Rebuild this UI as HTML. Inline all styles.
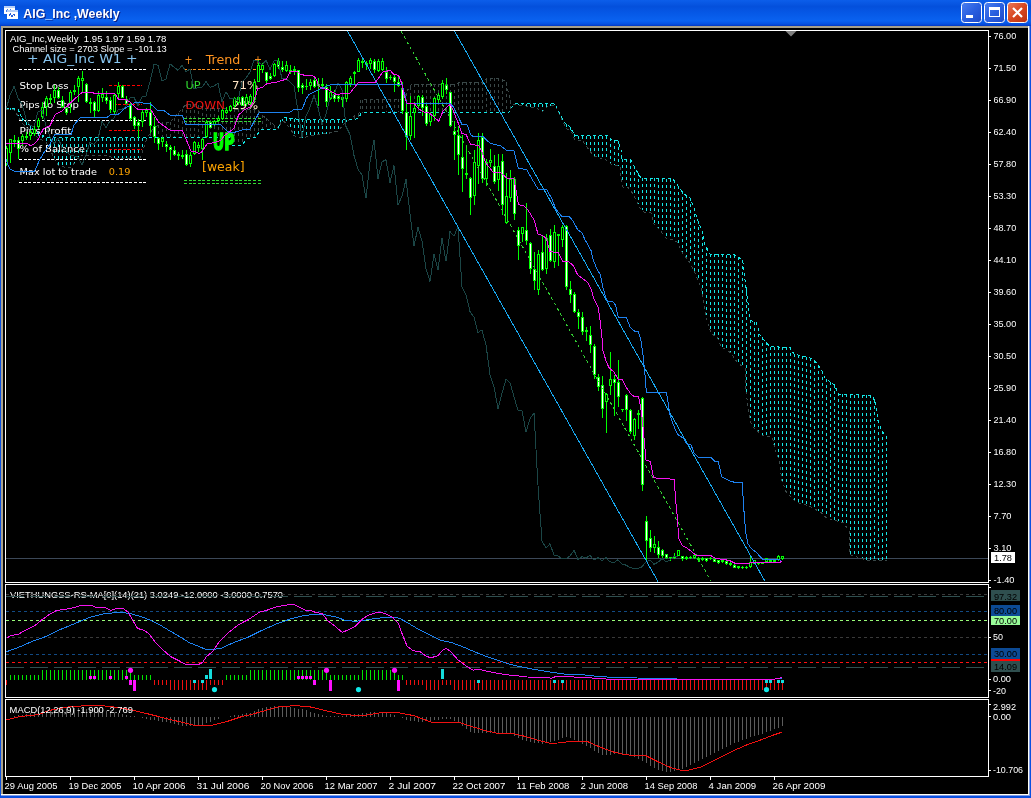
<!DOCTYPE html><html><head><meta charset="utf-8"><title>AIG_Inc,Weekly</title><style>html,body{margin:0;padding:0;background:#000;overflow:hidden}svg text{white-space:pre}</style></head><body><svg width="1031" height="798" viewBox="0 0 1031 798" style="display:block;will-change:transform">
<defs>
<linearGradient id="tb" x1="0" y1="0" x2="0" y2="1">
<stop offset="0" stop-color="#0c5eea"/><stop offset="0.25" stop-color="#0450dc"/><stop offset="0.5" stop-color="#0658e6"/><stop offset="0.8" stop-color="#0a62f0"/>
<stop offset="0.93" stop-color="#0650e0"/><stop offset="1" stop-color="#0338c0"/></linearGradient>
<linearGradient id="bb" x1="0" y1="0" x2="1" y2="1"><stop offset="0" stop-color="#4a7ff0"/><stop offset="0.5" stop-color="#2a5fe0"/><stop offset="1" stop-color="#1c48c8"/></linearGradient>
<linearGradient id="rb" x1="0" y1="0" x2="1" y2="1"><stop offset="0" stop-color="#e8795a"/><stop offset="0.5" stop-color="#d8471f"/><stop offset="1" stop-color="#b83010"/></linearGradient>
<clipPath id="cm"><rect x="6" y="31" width="982" height="551"/></clipPath>
<clipPath id="c1"><rect x="6" y="585" width="982" height="112"/></clipPath>
<clipPath id="c2"><rect x="6" y="700" width="982" height="76"/></clipPath>
</defs>
<rect x="0" y="0" width="1031" height="798" fill="#0a50e0"/>
<rect x="0" y="0" width="1031" height="26" fill="url(#tb)"/>
<rect x="1" y="26" width="1028" height="769" fill="#a8a08a"/>
<rect x="3" y="28" width="1025" height="766" fill="#000"/>
<rect x="1028" y="26" width="1" height="769" fill="#fffff4"/>
<rect x="1" y="794" width="1028" height="1" fill="#fffff4"/>
<rect x="1029" y="26" width="2" height="772" fill="#0a50e0"/>
<rect x="1029" y="26" width="1" height="769" fill="#7f9ce8"/>
<rect x="0" y="795" width="1031" height="3" fill="#0a50e0"/>
<rect x="1" y="795" width="1029" height="1" fill="#7f9ce8"/>
<g shape-rendering="crispEdges"><rect x="4" y="6" width="11" height="8" fill="#fff"/><rect x="4" y="6" width="11" height="2" fill="#b8d0f8"/><path d="M6 11.5 l1.5 -2 l1.5 2 l1.5 -2 l1.5 2" stroke="#4a7fe8" fill="none" stroke-width="1"/><rect x="7" y="10" width="11" height="9" fill="#fff" stroke="#2a62dc" stroke-width="0"/><rect x="7" y="10" width="11" height="2" fill="#b8d0f8"/><path d="M8.5 16.5 l2 -2.5 l1.5 2.5 l2 -2.5 l1.5 2.5" stroke="#2a5fd8" fill="none" stroke-width="1"/></g>
<text x="24.3" y="18.8" style="font-family:'Liberation Sans',sans-serif;font-weight:bold;font-size:13.5px" fill="#0a1c80" textLength="96.4" lengthAdjust="spacingAndGlyphs">AIG_Inc ,Weekly</text>
<text x="23.3" y="17.8" style="font-family:'Liberation Sans',sans-serif;font-weight:bold;font-size:13.5px" fill="#fff" textLength="96.4" lengthAdjust="spacingAndGlyphs">AIG_Inc ,Weekly</text>
<rect x="961.5" y="2.5" width="20" height="20" rx="3" fill="url(#bb)" stroke="#fff" stroke-width="1"/>
<rect x="984.5" y="2.5" width="20" height="20" rx="3" fill="url(#bb)" stroke="#fff" stroke-width="1"/>
<rect x="1007.5" y="2.5" width="20" height="20" rx="3" fill="url(#rb)" stroke="#fff" stroke-width="1"/>
<rect x="966" y="15" width="7" height="3" fill="#fff"/>
<rect x="989.5" y="7.5" width="10" height="9" fill="none" stroke="#fff" stroke-width="1"/><rect x="989" y="7" width="11" height="3" fill="#fff"/>
<path d="M1013 8 l9 9 M1022 8 l-9 9" stroke="#fff" stroke-width="2.2" fill="none"/>
<g shape-rendering="crispEdges" fill="none" stroke="#fff" stroke-width="1">
<rect x="5.5" y="30.5" width="983" height="552"/>
<rect x="5.5" y="584.5" width="983" height="113"/>
<rect x="5.5" y="699.5" width="983" height="77"/>
</g>
<g clip-path="url(#cm)">
<rect x="6" y="558" width="982" height="1" fill="#3c4858"/>
<path d="M150.5 133V138M154.5 128V138M158.5 125V138M162.5 123V138M166.5 122V138M170.5 122V138M174.5 118V138M178.5 113V138M182.5 109V138M186.5 104V138M190.5 104V138M194.5 104V138M198.5 105V138M202.5 107V138M206.5 108V138M210.5 108V138M214.5 108V138M218.5 109V138M222.5 109V138M226.5 109V138M230.5 109V138M234.5 109V145M238.5 109V145M242.5 109V145M246.5 110V140M250.5 110V138M254.5 110V137M258.5 110V133M262.5 115V130M266.5 118V129M270.5 122V129M274.5 125V129M278.5 127V129M354.5 116V119M358.5 114V119M362.5 100V113M366.5 100V112M370.5 100V112M374.5 100V112M378.5 100V112M382.5 100V112M386.5 99V112M390.5 99V112M394.5 99V112M398.5 99V112M402.5 99V112M406.5 93V112M410.5 87V112M414.5 84V112M418.5 84V112M422.5 84V112M426.5 84V112M430.5 84V112M434.5 84V112M438.5 84V112M442.5 84V112M446.5 84V112M450.5 84V112M454.5 84V112M458.5 83V112M462.5 82V112M466.5 82V112M470.5 82V112M474.5 82V112M478.5 82V112M482.5 82V112M486.5 80V112M490.5 78V112M494.5 78V112M498.5 78V112M502.5 79V112M506.5 82V112M510.5 100V110" stroke="#3a4848" stroke-width="1" stroke-dasharray="3 3" fill="none" shape-rendering="crispEdges"/>
<path d="M10.5 108V110M14.5 108V110M18.5 109V116M22.5 118V123M26.5 122V127M30.5 126V130M34.5 130V134M38.5 133V138M42.5 135V140M46.5 138V142M50.5 138V149M54.5 138V158M58.5 138V165M62.5 138V166M66.5 138V167M70.5 138V167M74.5 138V164M78.5 138V158M82.5 138V155M86.5 138V155M90.5 138V155M94.5 138V155M98.5 138V155M102.5 138V155M106.5 138V155M110.5 138V156M114.5 138V158M118.5 138V158M122.5 138V158M126.5 138V158M130.5 138V158M134.5 138V158M138.5 138V158M142.5 138V153M146.5 138V141M282.5 119V121M286.5 118V124M290.5 118V128M294.5 119V135M298.5 119V137M302.5 119V138M306.5 120V137M310.5 120V136M314.5 120V135M318.5 120V135M322.5 120V134M326.5 120V134M330.5 120V133M334.5 120V132M338.5 120V131M342.5 120V126M346.5 120V122M518.5 104V105M522.5 104V105M526.5 104V106M530.5 104V107M534.5 104V108M538.5 104V109M542.5 104V112M546.5 104V108M550.5 104V106M554.5 104V105M562.5 118V120M566.5 124V128M570.5 127V131M574.5 134V138M578.5 136V140M582.5 136V140M586.5 136V146M590.5 136V151M594.5 136V156M598.5 136V157M602.5 136V159M606.5 136V160M610.5 138V163M614.5 140V165M618.5 141V166M622.5 159V182M626.5 159V187M630.5 160V190M634.5 166V196M638.5 173V204M642.5 178V210M646.5 178V212M650.5 178V213M654.5 178V224M658.5 179V228M662.5 179V233M666.5 179V238M670.5 179V239M674.5 180V240M678.5 186V244M682.5 191V252M686.5 195V257M690.5 198V263M694.5 208V271M698.5 221V280M702.5 231V294M706.5 247V315M710.5 254V330M714.5 254V335M718.5 254V339M722.5 254V347M726.5 255V350M730.5 255V352M734.5 255V357M738.5 257V363M742.5 260V366M746.5 287V392M750.5 320V418M754.5 322V428M758.5 328V431M762.5 337V435M766.5 342V436M770.5 347V437M774.5 347V445M778.5 347V457M782.5 347V481M786.5 347V492M790.5 347V496M794.5 354V500M798.5 355V503M802.5 356V504M806.5 357V505M810.5 358V506M814.5 360V509M818.5 365V511M822.5 371V514M826.5 379V517M830.5 382V519M834.5 385V520M838.5 393V521M842.5 394V523M846.5 394V526M850.5 395V555M854.5 395V556M858.5 395V557M862.5 395V559M866.5 395V560M870.5 395V560M874.5 400V560M878.5 420V560M882.5 431V560M886.5 436V560" stroke="#14e6e6" stroke-width="1" stroke-dasharray="3 3" fill="none" shape-rendering="crispEdges"/>
<polyline points="6.0,109.5 14.0,110.0 18.0,116.0 22.0,123.0 27.0,127.5 34.0,134.5 40.0,139.0 46.0,142.5 50.0,149.0 54.0,158.0 58.0,165.0 64.0,167.0 72.0,167.0 76.0,160.0 82.0,155.0 108.0,155.0 112.0,158.0 140.0,158.0 143.0,150.0 147.0,138.0 152.0,130.0 158.0,125.0 163.0,122.5 170.5,122.0 174.0,118.0 178.0,113.0 182.6,108.0 186.0,104.5 196.0,104.5 205.0,108.0 230.0,109.0 258.0,110.0 262.0,115.0 268.0,120.0 274.0,125.0 279.0,128.0 281.0,121.0 284.0,121.5 290.4,128.3 294.2,135.8 303.0,138.0 310.6,135.6 328.3,133.3 338.4,130.8 344.7,123.2 349.0,120.2 356.0,115.0 360.0,112.5 361.0,100.0 403.7,99.0 407.0,91.0 411.5,84.5 457.0,84.0 459.0,82.5 484.0,82.5 487.0,78.0 500.0,78.0 506.0,82.0 508.6,93.5 511.0,104.6 515.0,104.6 526.0,106.0 538.0,109.0 542.0,112.0 547.0,107.0 555.0,104.6 558.0,111.0 562.0,120.0 566.0,128.0 572.0,133.0 575.0,140.0 582.0,140.0 589.0,150.0 594.0,156.0 606.0,160.0 612.0,165.0 620.0,166.0 621.0,178.0 623.0,187.0 628.0,187.0 633.0,194.0 640.0,208.0 644.0,212.0 651.0,213.0 654.0,224.0 660.0,230.0 666.0,238.0 674.0,240.0 677.5,242.6 682.5,252.7 690.0,262.7 695.0,272.7 701.0,287.8 704.0,305.0 707.6,323.0 711.0,333.0 717.6,338.0 721.0,346.7 731.0,353.0 737.7,363.0 745.0,368.0 746.0,391.6 749.0,412.6 751.6,425.8 762.0,435.0 772.6,437.6 775.0,449.5 779.0,460.0 782.0,481.0 786.0,491.6 796.0,502.0 809.5,506.0 821.0,512.6 826.6,518.0 843.7,523.0 849.0,531.0 850.0,554.7 866.0,560.0 887.0,560.5" stroke="#3a4848" stroke-width="1" stroke-dasharray="3 3" fill="none" shape-rendering="crispEdges"/>
<polyline points="6.0,108.5 15.0,108.5 18.0,109.0 22.0,118.0 27.0,123.0 34.0,130.0 40.0,134.0 46.0,137.5 231.0,137.5 232.0,145.4 241.7,145.4 246.7,139.0 255.6,137.0 259.0,132.0 263.0,129.0 278.0,129.0 281.0,120.0 284.0,117.4 293.0,118.8 308.0,119.7 348.4,119.7 358.5,118.8 361.0,113.2 365.0,112.5 508.6,112.5 510.0,109.6 515.0,103.6 555.0,103.6 559.0,112.0 564.0,122.0 570.0,127.0 575.0,135.7 608.0,136.0 612.0,140.0 618.0,141.0 621.0,150.0 622.0,159.0 631.0,159.7 636.0,170.0 641.0,178.0 673.0,179.0 678.0,186.0 684.0,194.0 690.0,198.0 694.0,207.5 697.5,220.0 702.6,232.6 705.0,245.0 710.0,254.0 735.0,255.0 742.7,260.0 745.0,280.0 747.7,300.0 750.0,320.0 756.5,323.0 760.0,335.0 766.5,343.0 770.0,346.7 790.0,347.4 794.0,354.0 810.0,358.0 815.0,361.0 821.0,369.0 825.0,378.0 834.5,385.0 838.4,394.0 872.6,395.5 876.6,407.0 878.0,420.5 882.0,431.0 886.0,436.0 887.0,560.0" stroke="#14e6e6" stroke-width="1" stroke-dasharray="3 3" fill="none" shape-rendering="crispEdges"/>
<text x="10" y="42.1" xml:space="preserve" style="font-family:'Liberation Sans',sans-serif;font-size:9.4px;" fill="#fff" textLength="156.4" lengthAdjust="spacingAndGlyphs">AIG_Inc,Weekly  1.95 1.97 1.59 1.78</text>
<text x="12.6" y="51.8" xml:space="preserve" style="font-family:'Liberation Sans',sans-serif;font-size:9.4px;" fill="#fff" textLength="154.2" lengthAdjust="spacingAndGlyphs">Channel size = 2703 Slope = -101.13</text>
<text x="27" y="63" xml:space="preserve" style="font-family:'DejaVu Sans','Liberation Sans',sans-serif;font-size:12px;" fill="#87c4ee" textLength="110.7" lengthAdjust="spacingAndGlyphs">+ AIG_Inc W1 +</text>
<path d="M19 69.5H147.5" stroke="#fff" stroke-width="1" stroke-dasharray="3 1.6" fill="none" shape-rendering="crispEdges"/>
<path d="M19 120.5H147.5" stroke="#fff" stroke-width="1" stroke-dasharray="3 1.6" fill="none" shape-rendering="crispEdges"/>
<path d="M19 159.5H147.5" stroke="#fff" stroke-width="1" stroke-dasharray="3 1.6" fill="none" shape-rendering="crispEdges"/>
<path d="M19 182.5H147.5" stroke="#fff" stroke-width="1" stroke-dasharray="3 1.6" fill="none" shape-rendering="crispEdges"/>
<path d="M109 85.5H142" stroke="#f00" stroke-width="1" stroke-dasharray="3 1.6" fill="none" shape-rendering="crispEdges"/>
<path d="M109 104.5H142" stroke="#f00" stroke-width="1" stroke-dasharray="3 1.6" fill="none" shape-rendering="crispEdges"/>
<path d="M109 130.5H142" stroke="#f00" stroke-width="1" stroke-dasharray="3 1.6" fill="none" shape-rendering="crispEdges"/>
<path d="M109 149.5H142" stroke="#f00" stroke-width="1" stroke-dasharray="3 1.6" fill="none" shape-rendering="crispEdges"/>
<text x="19.6" y="88.8" xml:space="preserve" style="font-family:'DejaVu Sans','Liberation Sans',sans-serif;font-size:9.3px;" fill="#fff" textLength="49.1" lengthAdjust="spacingAndGlyphs">Stop Loss</text>
<text x="19.6" y="108" xml:space="preserve" style="font-family:'DejaVu Sans','Liberation Sans',sans-serif;font-size:9.3px;" fill="#fff" textLength="59.4" lengthAdjust="spacingAndGlyphs">Pips to Stop</text>
<text x="19.6" y="134" xml:space="preserve" style="font-family:'DejaVu Sans','Liberation Sans',sans-serif;font-size:9.3px;" fill="#fff" textLength="51.8" lengthAdjust="spacingAndGlyphs">Pips Profit</text>
<text x="19.6" y="152.3" xml:space="preserve" style="font-family:'DejaVu Sans','Liberation Sans',sans-serif;font-size:9.3px;" fill="#fff" textLength="65.4" lengthAdjust="spacingAndGlyphs">% of Balance</text>
<text x="19.6" y="175" xml:space="preserve" style="font-family:'DejaVu Sans','Liberation Sans',sans-serif;font-size:9.3px;" fill="#fff" textLength="77.4" lengthAdjust="spacingAndGlyphs">Max lot to trade</text>
<text x="108.7" y="175" xml:space="preserve" style="font-family:'DejaVu Sans','Liberation Sans',sans-serif;font-size:9.3px;" fill="#ffa500" textLength="21.8" lengthAdjust="spacingAndGlyphs">0.19</text>
<text x="184.5" y="63.6" xml:space="preserve" style="font-family:'DejaVu Sans','Liberation Sans',sans-serif;font-size:12px;" fill="#ff9420" textLength="8.0" lengthAdjust="spacingAndGlyphs">+</text>
<text x="205.7" y="63.6" xml:space="preserve" style="font-family:'DejaVu Sans','Liberation Sans',sans-serif;font-size:12px;" fill="#ff9420" textLength="34.7" lengthAdjust="spacingAndGlyphs">Trend</text>
<text x="254" y="63.6" xml:space="preserve" style="font-family:'DejaVu Sans','Liberation Sans',sans-serif;font-size:12px;" fill="#ff9420" textLength="8.0" lengthAdjust="spacingAndGlyphs">+</text>
<path d="M184 69.5H262" stroke="#ff9420" stroke-width="1" stroke-dasharray="3 1.6" fill="none" shape-rendering="crispEdges"/>
<text x="185.6" y="88.5" xml:space="preserve" style="font-family:'DejaVu Sans','Liberation Sans',sans-serif;font-size:11px;" fill="#32dc32" textLength="15.1" lengthAdjust="spacingAndGlyphs">UP</text>
<text x="232" y="88.5" xml:space="preserve" style="font-family:'DejaVu Sans','Liberation Sans',sans-serif;font-size:11px;" fill="#ffe4c4" textLength="26.0" lengthAdjust="spacingAndGlyphs">71%</text>
<text x="185.6" y="108.6" xml:space="preserve" style="font-family:'DejaVu Sans','Liberation Sans',sans-serif;font-size:11px;" fill="#f01414" textLength="39.4" lengthAdjust="spacingAndGlyphs">DOWN</text>
<text x="232" y="108.6" xml:space="preserve" style="font-family:'DejaVu Sans','Liberation Sans',sans-serif;font-size:11px;" fill="#ffe4c4" textLength="26.0" lengthAdjust="spacingAndGlyphs">29%</text>
<path d="M184 118.5H262" stroke="#32dc32" stroke-width="1" stroke-dasharray="3 1.6" fill="none" shape-rendering="crispEdges"/>
<path d="M184 121.5H262" stroke="#32dc32" stroke-width="1" stroke-dasharray="3 1.6" fill="none" shape-rendering="crispEdges"/>
<path d="M184 180.5H262" stroke="#32dc32" stroke-width="1" stroke-dasharray="3 1.6" fill="none" shape-rendering="crispEdges"/>
<path d="M184 183.5H262" stroke="#32dc32" stroke-width="1" stroke-dasharray="3 1.6" fill="none" shape-rendering="crispEdges"/>
<text x="212.8" y="150" xml:space="preserve" style="font-family:'DejaVu Sans','Liberation Sans',sans-serif;font-size:23.2px;font-weight:bold;stroke:#00ff00;stroke-width:1.5px;stroke-linejoin:miter" fill="#00ff00" textLength="21.8" lengthAdjust="spacingAndGlyphs">UP</text>
<text x="202" y="171" xml:space="preserve" style="font-family:'DejaVu Sans','Liberation Sans',sans-serif;font-size:13px;" fill="#ffa500" textLength="42.6" lengthAdjust="spacingAndGlyphs">[weak]</text>
<g shape-rendering="crispEdges">
<path d="M6.5 146V166M10.5 139V163M14.5 135V147M18.5 137V159M22.5 134V146M26.5 132V140M30.5 130V140M34.5 124V136M38.5 118V129M42.5 102V119M46.5 96V116M50.5 94V104M54.5 85V103M58.5 87V99M62.5 96V108M66.5 107V115M70.5 90V113M74.5 85V95M78.5 76V102M82.5 71V92M86.5 83V103M90.5 98V113M94.5 101V117M98.5 91V112M102.5 88V102M106.5 91V104M110.5 97V113M114.5 94V114M118.5 82V98M122.5 85V98M126.5 96V105M130.5 102V121M134.5 116V129M138.5 119V138M142.5 110V127M146.5 108V117M150.5 102V133M154.5 117V143M158.5 137V150M162.5 137V147M166.5 141V152M170.5 145V160M174.5 146V156M178.5 152V160M182.5 150V159M186.5 150V166M190.5 152V167M194.5 141V155M198.5 142V152M202.5 138V160M206.5 120V138M210.5 121V128M214.5 120V126M218.5 116V122M222.5 109V120M226.5 107V114M230.5 105V112M234.5 97V108M238.5 96V105M242.5 96V106M246.5 94V106M250.5 94V106M254.5 79V102M258.5 60V82M262.5 63V73M266.5 72V84M270.5 73V80M274.5 63V77M278.5 58V69M282.5 61V72M286.5 61V72M290.5 65V74M294.5 66V75M298.5 70V92M302.5 83V94M306.5 79V90M310.5 79V90M314.5 78V88M318.5 78V106M322.5 78V88M326.5 84V107M330.5 86V100M334.5 90V102M338.5 95V102M342.5 96V107M346.5 81V102M350.5 76V87M354.5 71V84M358.5 58V72M362.5 59V68M366.5 61V70M370.5 58V69M374.5 59V73M378.5 59V72M382.5 58V71M386.5 67V83M390.5 75V80M394.5 75V92M398.5 77V87M402.5 82V114M406.5 103V150M410.5 96V140M414.5 102V138M418.5 95V108M422.5 95V116M426.5 104V126M430.5 112V126M434.5 97V121M438.5 93V104M442.5 80V99M446.5 78V94M450.5 92V127M454.5 121V160M458.5 126V175M462.5 135V192M466.5 145V179M470.5 177V215M474.5 150V205M478.5 133V184M482.5 133V183M486.5 159V186M490.5 149V167M494.5 155V184M498.5 154V191M502.5 154V215M506.5 173V224M510.5 170V202M514.5 177V220M518.5 227V260M522.5 227V242M526.5 203V245M530.5 242V274M534.5 252V290M538.5 250V295M542.5 236V271M546.5 234V274M550.5 229V262M554.5 225V268M558.5 234V266M562.5 225V247M566.5 225V290M570.5 281V303M574.5 292V313M578.5 309V329M582.5 312V335M586.5 327V341M590.5 326V353M594.5 344V379M598.5 374V391M602.5 376V418M606.5 393V433M610.5 352V395M614.5 375V416M618.5 360V407M622.5 409V412M626.5 394V421M630.5 409V434M634.5 418V440M638.5 410V429M642.5 397V491M646.5 516V562M650.5 530V552M654.5 536V553M658.5 541V558M662.5 549V558M666.5 554V559M670.5 557V561M674.5 553V559M678.5 550V556M682.5 556V561M686.5 556V560M690.5 556V559M694.5 553V559M698.5 557V562M702.5 557V561M706.5 558V562M710.5 557V560M714.5 558V562M718.5 560V564M722.5 559V563M726.5 560V565M730.5 562V566M734.5 564V568M738.5 566V569M742.5 566V569M746.5 566V569M750.5 556V568M754.5 560V564M758.5 562V565M762.5 562V564M766.5 558V563M770.5 560V562M774.5 560V562M778.5 555V561M782.5 556V560" stroke="#00ff00" stroke-width="1" fill="none"/>
<path d="M5 148h3v16h-3zM9 139h3v14h-3zM13 140h3v2h-3zM17 140h3v9h-3zM21 136h3v5h-3zM25 136h3v2h-3zM29 132h3v4h-3zM33 129h3v5h-3zM37 120h3v7h-3zM41 107h3v10h-3zM45 98h3v9h-3zM49 98h3v2h-3zM53 90h3v8h-3zM57 90h3v8h-3zM61 100h3v7h-3zM65 108h3v5h-3zM69 92h3v12h-3zM73 90h3v2h-3zM77 78h3v9h-3zM81 78h3v3h-3zM85 84h3v18h-3zM89 102h3v2h-3zM93 102h3v9h-3zM97 95h3v16h-3zM101 94h3v4h-3zM105 97h3v4h-3zM109 100h3v10h-3zM113 95h3v17h-3zM117 86h3v8h-3zM121 86h3v12h-3zM125 99h3v5h-3zM129 104h3v15h-3zM133 117h3v9h-3zM137 122h3v4h-3zM141 112h3v10h-3zM145 110h3v3h-3zM149 112h3v14h-3zM153 126h3v11h-3zM157 138h3v6h-3zM161 138h3v4h-3zM165 144h3v3h-3zM169 147h3v3h-3zM173 150h3v5h-3zM177 154h3v2h-3zM181 155h3v2h-3zM185 154h3v11h-3zM189 155h3v9h-3zM193 142h3v12h-3zM197 145h3v3h-3zM201 139h3v10h-3zM205 122h3v15h-3zM209 122h3v6h-3zM213 121h3v4h-3zM217 118h3v3h-3zM221 110h3v9h-3zM225 110h3v3h-3zM229 106h3v5h-3zM233 98h3v8h-3zM237 97h3v6h-3zM241 97h3v9h-3zM245 97h3v7h-3zM249 96h3v7h-3zM253 82h3v18h-3zM257 65h3v17h-3zM261 65h3v5h-3zM265 72h3v9h-3zM269 76h3v3h-3zM273 64h3v12h-3zM277 61h3v6h-3zM281 67h3v3h-3zM285 65h3v6h-3zM289 70h3v2h-3zM293 69h3v2h-3zM297 70h3v18h-3zM301 85h3v3h-3zM305 86h3v1h-3zM309 82h3v4h-3zM313 80h3v7h-3zM317 84h3v2h-3zM321 84h3v2h-3zM325 87h3v15h-3zM329 92h3v7h-3zM333 94h3v5h-3zM337 96h3v3h-3zM341 97h3v3h-3zM345 82h3v17h-3zM349 78h3v6h-3zM353 72h3v2h-3zM357 60h3v12h-3zM361 61h3v2h-3zM365 63h3v2h-3zM369 60h3v4h-3zM373 61h3v9h-3zM377 61h3v10h-3zM381 61h3v9h-3zM385 72h3v7h-3zM389 77h3v1h-3zM393 77h3v5h-3zM397 82h3v4h-3zM401 88h3v23h-3zM405 112h3v25h-3zM409 116h3v20h-3zM413 108h3v5h-3zM417 96h3v10h-3zM421 97h3v11h-3zM425 106h3v18h-3zM429 114h3v8h-3zM433 98h3v18h-3zM437 95h3v5h-3zM441 83h3v14h-3zM445 85h3v5h-3zM449 92h3v34h-3zM453 131h3v4h-3zM457 135h3v20h-3zM461 157h3v12h-3zM465 173h3v2h-3zM469 178h3v20h-3zM473 162h3v34h-3zM477 140h3v26h-3zM481 137h3v42h-3zM485 162h3v17h-3zM489 160h3v3h-3zM493 166h3v16h-3zM497 166h3v14h-3zM501 161h3v44h-3zM505 196h3v27h-3zM509 179h3v19h-3zM513 179h3v35h-3zM517 230h3v16h-3zM521 227h3v7h-3zM525 230h3v11h-3zM529 243h3v26h-3zM533 269h3v12h-3zM537 254h3v36h-3zM541 252h3v18h-3zM545 238h3v31h-3zM549 235h3v26h-3zM553 232h3v30h-3zM557 234h3v2h-3zM561 227h3v13h-3zM565 226h3v61h-3zM569 289h3v6h-3zM573 294h3v18h-3zM577 312h3v5h-3zM581 317h3v15h-3zM585 330h3v2h-3zM589 335h3v10h-3zM593 346h3v29h-3zM597 377h3v10h-3zM601 385h3v24h-3zM605 394h3v8h-3zM609 379h3v7h-3zM613 379h3v4h-3zM617 382h3v15h-3zM621 409h3v1h-3zM625 395h3v15h-3zM629 410h3v22h-3zM633 419h3v17h-3zM637 413h3v2h-3zM641 398h3v87h-3zM645 521h3v20h-3zM649 538h3v10h-3zM653 544h3v4h-3zM657 547h3v8h-3zM661 550h3v6h-3zM665 554h3v4h-3zM669 557h3v1h-3zM673 556h3v2h-3zM677 550h3v6h-3zM681 556h3v3h-3zM685 557h3v2h-3zM689 557h3v1h-3zM693 555h3v3h-3zM697 558h3v2h-3zM701 558h3v2h-3zM705 558h3v3h-3zM709 558h3v1h-3zM713 559h3v3h-3zM717 560h3v3h-3zM721 560h3v2h-3zM725 561h3v3h-3zM729 563h3v2h-3zM733 565h3v3h-3zM737 566h3v2h-3zM741 567h3v1h-3zM745 567h3v1h-3zM749 562h3v5h-3zM753 560h3v4h-3zM757 562h3v2h-3zM761 562h3v2h-3zM765 558h3v4h-3zM769 560h3v2h-3zM773 560h3v2h-3zM777 556h3v4h-3zM781 556h3v3h-3z" fill="#00ff00"/>
<path d="M6 149h1v14h-1zM10 140h1v12h-1zM22 137h1v3h-1zM30 133h1v2h-1zM34 130h1v3h-1zM38 121h1v5h-1zM42 108h1v8h-1zM46 99h1v7h-1zM54 91h1v6h-1zM70 93h1v10h-1zM78 79h1v7h-1zM82 79h1v1h-1zM98 96h1v14h-1zM102 95h1v2h-1zM114 96h1v15h-1zM118 87h1v6h-1zM142 113h1v8h-1zM146 111h1v1h-1zM162 139h1v2h-1zM190 156h1v7h-1zM194 143h1v10h-1zM198 146h1v1h-1zM202 140h1v8h-1zM206 123h1v13h-1zM214 122h1v2h-1zM218 119h1v1h-1zM222 111h1v7h-1zM226 111h1v1h-1zM230 107h1v3h-1zM234 99h1v6h-1zM238 98h1v4h-1zM246 98h1v5h-1zM250 97h1v5h-1zM254 83h1v16h-1zM258 66h1v15h-1zM262 66h1v3h-1zM274 65h1v10h-1zM286 66h1v4h-1zM310 83h1v2h-1zM330 93h1v5h-1zM346 83h1v15h-1zM350 79h1v4h-1zM358 61h1v10h-1zM370 61h1v2h-1zM378 62h1v8h-1zM382 62h1v7h-1zM410 117h1v18h-1zM414 109h1v3h-1zM418 97h1v8h-1zM430 115h1v6h-1zM434 99h1v16h-1zM438 96h1v3h-1zM442 84h1v12h-1zM474 163h1v32h-1zM478 141h1v24h-1zM486 163h1v15h-1zM490 161h1v1h-1zM498 167h1v12h-1zM506 197h1v25h-1zM510 180h1v17h-1zM522 228h1v5h-1zM538 255h1v34h-1zM546 239h1v29h-1zM554 233h1v28h-1zM562 228h1v11h-1zM606 395h1v6h-1zM610 380h1v5h-1zM634 420h1v15h-1zM654 545h1v2h-1zM678 551h1v4h-1zM694 556h1v1h-1zM750 563h1v3h-1zM754 561h1v2h-1zM766 559h1v2h-1zM778 557h1v2h-1zM782 557h1v1h-1z" fill="#000"/>
<path d="M18 141h1v7h-1zM58 91h1v6h-1zM62 101h1v5h-1zM66 109h1v3h-1zM86 85h1v16h-1zM94 103h1v7h-1zM106 98h1v2h-1zM110 101h1v8h-1zM122 87h1v10h-1zM126 100h1v3h-1zM130 105h1v13h-1zM134 118h1v7h-1zM138 123h1v2h-1zM150 113h1v12h-1zM154 127h1v9h-1zM158 139h1v4h-1zM166 145h1v1h-1zM170 148h1v1h-1zM174 151h1v3h-1zM186 155h1v9h-1zM210 123h1v4h-1zM242 98h1v7h-1zM266 73h1v7h-1zM270 77h1v1h-1zM278 62h1v4h-1zM282 68h1v1h-1zM298 71h1v16h-1zM302 86h1v1h-1zM314 81h1v5h-1zM326 88h1v13h-1zM334 95h1v3h-1zM338 97h1v1h-1zM342 98h1v1h-1zM374 62h1v7h-1zM386 73h1v5h-1zM394 78h1v3h-1zM398 83h1v2h-1zM402 89h1v21h-1zM406 113h1v23h-1zM422 98h1v9h-1zM426 107h1v16h-1zM446 86h1v3h-1zM450 93h1v32h-1zM454 132h1v2h-1zM458 136h1v18h-1zM462 158h1v10h-1zM470 179h1v18h-1zM482 138h1v40h-1zM494 167h1v14h-1zM502 162h1v42h-1zM514 180h1v33h-1zM518 231h1v14h-1zM526 231h1v9h-1zM530 244h1v24h-1zM534 270h1v10h-1zM542 253h1v16h-1zM550 236h1v24h-1zM566 227h1v59h-1zM570 290h1v4h-1zM574 295h1v16h-1zM578 313h1v3h-1zM582 318h1v13h-1zM590 336h1v8h-1zM594 347h1v27h-1zM598 378h1v8h-1zM602 386h1v22h-1zM614 380h1v2h-1zM618 383h1v13h-1zM626 396h1v13h-1zM630 411h1v20h-1zM642 399h1v85h-1zM646 522h1v18h-1zM650 539h1v8h-1zM658 548h1v6h-1zM662 551h1v4h-1zM666 555h1v2h-1zM682 557h1v1h-1zM706 559h1v1h-1zM714 560h1v1h-1zM718 561h1v1h-1zM726 562h1v1h-1zM734 566h1v1h-1z" fill="#fff"/>
</g>
<polyline points="6.0,109.8 10.0,95.3 14.0,86.5 18.0,97.8 22.0,104.0 26.0,118.7 30.0,125.7 34.0,126.3 38.0,111.8 42.0,110.0 46.0,126.3 50.0,137.0 54.0,144.0 58.0,137.8 62.0,147.3 66.0,150.4 70.0,154.9 74.0,156.0 78.0,156.7 82.0,165.0 86.0,154.9 90.0,142.2 94.0,144.8 98.0,139.0 102.0,121.5 106.0,127.5 110.0,120.8 114.0,118.3 118.0,110.0 122.0,109.5 126.0,106.3 130.0,98.0 134.0,97.3 138.0,105.6 142.0,96.7 146.0,96.0 150.0,81.6 154.0,64.6 158.0,65.2 162.0,81.0 166.0,79.0 170.0,64.0 174.0,67.0 178.0,70.3 182.0,65.2 186.0,71.5 190.0,69.0 194.0,88.5 198.0,87.9 202.0,87.3 206.0,81.6 210.0,87.3 214.0,86.0 218.0,83.5 222.0,101.8 226.0,91.7 230.0,98.6 234.0,98.6 238.0,100.5 242.0,82.2 246.0,77.8 250.0,72.2 254.0,60.2 258.0,61.4 262.0,65.2 266.0,60.2 270.0,69.6 274.0,60.8 278.0,60.8 282.0,79.0 286.0,78.5 290.0,82.2 294.0,86.0 298.0,111.2 302.0,137.0 306.0,116.3 310.0,107.5 314.0,95.5 318.0,107.5 322.0,124.5 326.0,114.4 330.0,98.0 334.0,94.9 338.0,82.9 342.0,89.8 346.0,126.4 350.0,134.6 354.0,155.4 358.0,169.3 362.0,175.0 366.0,198.3 370.0,162.3 374.0,139.6 378.0,178.7 382.0,161.7 386.0,159.8 390.0,182.5 394.0,165.5 398.0,204.8 402.0,196.3 406.0,179.4 410.0,214.0 414.0,246.0 418.0,227.2 422.0,241.0 426.0,268.8 430.0,281.4 434.0,254.3 438.0,270.0 442.0,238.5 446.0,261.2 450.0,231.6 454.0,236.0 458.0,226.6 462.0,287.0 466.0,294.6 470.0,311.6 474.0,317.3 478.0,332.4 482.0,330.0 486.0,345.0 490.0,374.6 494.0,386.6 498.0,408.6 502.0,393.5 506.0,379.0 510.0,382.8 514.0,396.7 518.0,410.3 522.0,410.5 526.0,432.0 530.0,418.7 534.0,413.0 538.0,485.4 542.0,541.2 546.0,547.8 550.0,543.7 554.0,555.2 558.0,556.0 562.0,558.5 566.0,558.5 570.0,556.0 574.0,550.3 578.0,559.4 582.0,556.6 586.0,558.2 590.0,555.2 594.0,560.2 598.0,557.7 602.0,560.7 606.0,557.7 610.0,561.8 614.0,562.7 618.0,559.7 622.0,564.3 626.0,565.1 630.0,567.6 634.0,568.4 638.0,568.4 642.0,566.8 646.0,561.8 650.0,560.2 654.0,564.3 658.0,562.3 662.0,558.5 666.0,561.8 670.0,560.2 674.0,556.0 678.0,556.5" stroke="#1b4646" stroke-width="1" fill="none" shape-rendering="crispEdges"/>
<path d="M347.5 31L658 581.6M454.4 31L765.2 581.6" stroke="#18a8f0" stroke-width="1" fill="none" shape-rendering="crispEdges"/>
<path d="M401 31L711 581" stroke="#32cd32" stroke-width="1" stroke-dasharray="3 3" fill="none" shape-rendering="crispEdges"/>
<polyline points="6.0,159.0 7.5,164.0 10.0,169.0 15.0,171.3 34.6,171.3 40.0,159.0 44.0,152.6 50.0,144.0 54.6,135.0 71.0,134.8 74.0,125.0 80.0,118.0 100.0,117.4 107.2,117.4 111.0,114.2 118.5,114.2 126.0,107.5 130.0,106.0 135.0,102.3 150.0,103.6 157.8,110.5 164.0,110.5 170.4,115.3 182.4,115.3 185.6,124.4 220.9,124.7 226.6,130.7 229.7,132.6 233.5,132.6 244.2,129.4 250.0,129.0 253.9,122.0 258.9,113.0 276.6,112.5 290.4,112.0 294.2,109.4 302.4,109.0 306.2,98.6 308.7,94.9 315.7,91.0 328.3,85.4 333.3,84.0 402.2,84.0 403.5,90.4 406.7,103.3 450.2,103.3 453.3,106.8 457.7,115.7 462.0,124.5 467.2,125.0 470.6,134.6 473.0,136.5 483.2,136.7 490.2,143.4 500.9,146.0 506.6,150.4 514.0,150.6 518.5,168.6 526.7,169.3 530.0,175.6 538.0,189.0 546.8,190.0 551.9,198.8 555.7,209.0 562.0,216.5 569.5,216.7 573.3,221.5 577.7,229.7 582.0,232.9 584.7,239.2 591.0,250.5 593.5,260.6 597.4,270.0 600.5,275.0 603.0,287.7 605.6,297.0 607.5,301.0 612.5,301.5 615.7,305.3 618.2,317.3 626.4,317.7 630.2,327.4 634.6,331.2 638.4,331.4 640.9,340.6 642.8,353.2 645.0,375.2 646.3,392.2 666.5,392.6 668.4,404.2 669.6,414.3 674.7,428.2 677.8,434.5 683.5,438.3 686.6,444.0 691.0,444.8 693.9,452.6 698.3,457.4 710.9,457.4 714.7,461.4 718.4,461.7 721.6,476.6 728.5,480.4 734.2,482.2 742.4,483.0 743.2,500.0 744.6,519.8 746.2,535.4 747.9,543.7 751.2,548.6 756.0,552.0 760.3,556.9 762.7,559.0 778.4,559.0 780.9,560.7" stroke="#1e82f0" stroke-width="1" fill="none" shape-rendering="crispEdges"/>
<polyline points="6.0,143.3 27.0,143.3 30.6,145.9 34.6,143.6 38.6,139.0 40.4,134.4 43.5,128.7 50.0,125.8 53.0,119.3 55.5,114.2 61.8,111.0 68.0,105.4 74.4,99.0 82.0,92.5 92.7,92.5 94.0,93.4 114.8,93.4 118.5,99.3 126.0,99.7 130.0,102.2 137.7,109.3 150.9,109.9 159.0,122.5 163.5,125.7 170.4,130.5 182.4,130.5 188.7,145.4 190.6,151.0 195.7,151.7 198.8,153.6 202.0,151.7 207.0,144.0 210.8,143.5 220.9,140.4 224.7,135.3 234.0,128.4 238.5,115.0 244.2,110.0 250.0,107.0 252.6,103.0 255.8,95.5 257.7,88.5 262.7,87.3 267.0,83.5 276.6,82.2 286.7,79.0 290.4,71.5 297.4,71.5 300.5,74.7 313.0,76.0 315.7,77.8 318.8,86.0 322.6,88.5 328.3,89.8 335.8,94.2 349.7,93.6 358.0,82.9 375.0,82.6 378.3,78.5 382.7,72.2 390.3,70.3 393.4,74.0 398.5,75.3 401.6,82.9 403.5,93.0 406.7,103.0 414.2,103.7 418.6,108.7 423.0,111.9 429.4,113.0 438.8,121.3 443.2,110.6 450.2,104.3 453.3,111.0 458.6,123.9 461.8,133.3 466.2,134.6 470.6,144.7 478.8,145.3 482.0,151.6 485.8,163.0 493.3,172.4 500.9,173.0 506.6,178.0 514.0,178.7 518.5,204.6 524.0,205.8 528.0,210.0 534.2,220.3 538.0,234.0 542.4,235.4 546.2,238.5 550.0,251.8 558.2,252.4 562.6,261.2 569.0,261.9 573.3,265.7 577.7,275.0 584.0,279.5 588.0,283.0 591.0,289.0 594.0,299.0 598.0,306.6 599.0,313.0 600.5,324.0 601.8,335.6 603.0,350.7 606.0,360.8 609.0,367.7 614.0,372.0 618.5,379.6 622.3,379.6 626.0,387.0 630.5,393.5 634.3,396.7 638.7,397.0 640.6,406.7 642.5,420.6 643.8,435.8 646.0,460.0 650.4,461.4 653.5,477.8 674.3,479.3 675.6,500.5 677.5,518.0 678.6,538.0 682.0,545.3 687.7,548.6 696.0,555.2 710.8,555.6 715.7,558.5 724.0,559.4 730.6,561.0 735.5,563.5 747.9,563.5 752.0,562.3 780.0,562.3 781.7,561.0" stroke="#f514f0" stroke-width="1" fill="none" shape-rendering="crispEdges"/>
<path d="M785.5 31 h11 l-5.5 5.5 z" fill="#808080"/>
</g>
<g shape-rendering="crispEdges" fill="#fff">
<rect x="989" y="36" width="2" height="1"/>
<rect x="989" y="68" width="2" height="1"/>
<rect x="989" y="100" width="2" height="1"/>
<rect x="989" y="132" width="2" height="1"/>
<rect x="989" y="164" width="2" height="1"/>
<rect x="989" y="196" width="2" height="1"/>
<rect x="989" y="228" width="2" height="1"/>
<rect x="989" y="260" width="2" height="1"/>
<rect x="989" y="292" width="2" height="1"/>
<rect x="989" y="324" width="2" height="1"/>
<rect x="989" y="356" width="2" height="1"/>
<rect x="989" y="388" width="2" height="1"/>
<rect x="989" y="420" width="2" height="1"/>
<rect x="989" y="452" width="2" height="1"/>
<rect x="989" y="484" width="2" height="1"/>
<rect x="989" y="516" width="2" height="1"/>
<rect x="989" y="548" width="2" height="1"/>
<rect x="989" y="580" width="2" height="1"/>
</g>
<text x="993.5" y="38.9" xml:space="preserve" style="font-family:'Liberation Sans',sans-serif;font-size:9.4px;" fill="#fff" textLength="22.7" lengthAdjust="spacingAndGlyphs">76.00</text>
<text x="993.5" y="70.9" xml:space="preserve" style="font-family:'Liberation Sans',sans-serif;font-size:9.4px;" fill="#fff" textLength="22.7" lengthAdjust="spacingAndGlyphs">71.50</text>
<text x="993.5" y="102.9" xml:space="preserve" style="font-family:'Liberation Sans',sans-serif;font-size:9.4px;" fill="#fff" textLength="22.7" lengthAdjust="spacingAndGlyphs">66.90</text>
<text x="993.5" y="134.9" xml:space="preserve" style="font-family:'Liberation Sans',sans-serif;font-size:9.4px;" fill="#fff" textLength="22.7" lengthAdjust="spacingAndGlyphs">62.40</text>
<text x="993.5" y="166.9" xml:space="preserve" style="font-family:'Liberation Sans',sans-serif;font-size:9.4px;" fill="#fff" textLength="22.7" lengthAdjust="spacingAndGlyphs">57.80</text>
<text x="993.5" y="198.9" xml:space="preserve" style="font-family:'Liberation Sans',sans-serif;font-size:9.4px;" fill="#fff" textLength="22.7" lengthAdjust="spacingAndGlyphs">53.30</text>
<text x="993.5" y="230.9" xml:space="preserve" style="font-family:'Liberation Sans',sans-serif;font-size:9.4px;" fill="#fff" textLength="22.7" lengthAdjust="spacingAndGlyphs">48.70</text>
<text x="993.5" y="262.9" xml:space="preserve" style="font-family:'Liberation Sans',sans-serif;font-size:9.4px;" fill="#fff" textLength="22.7" lengthAdjust="spacingAndGlyphs">44.10</text>
<text x="993.5" y="294.9" xml:space="preserve" style="font-family:'Liberation Sans',sans-serif;font-size:9.4px;" fill="#fff" textLength="22.7" lengthAdjust="spacingAndGlyphs">39.60</text>
<text x="993.5" y="326.9" xml:space="preserve" style="font-family:'Liberation Sans',sans-serif;font-size:9.4px;" fill="#fff" textLength="22.7" lengthAdjust="spacingAndGlyphs">35.00</text>
<text x="993.5" y="358.9" xml:space="preserve" style="font-family:'Liberation Sans',sans-serif;font-size:9.4px;" fill="#fff" textLength="22.7" lengthAdjust="spacingAndGlyphs">30.50</text>
<text x="993.5" y="390.9" xml:space="preserve" style="font-family:'Liberation Sans',sans-serif;font-size:9.4px;" fill="#fff" textLength="22.7" lengthAdjust="spacingAndGlyphs">25.90</text>
<text x="993.5" y="422.9" xml:space="preserve" style="font-family:'Liberation Sans',sans-serif;font-size:9.4px;" fill="#fff" textLength="22.7" lengthAdjust="spacingAndGlyphs">21.40</text>
<text x="993.5" y="454.9" xml:space="preserve" style="font-family:'Liberation Sans',sans-serif;font-size:9.4px;" fill="#fff" textLength="22.7" lengthAdjust="spacingAndGlyphs">16.80</text>
<text x="993.5" y="486.9" xml:space="preserve" style="font-family:'Liberation Sans',sans-serif;font-size:9.4px;" fill="#fff" textLength="22.7" lengthAdjust="spacingAndGlyphs">12.30</text>
<text x="993.5" y="518.9" xml:space="preserve" style="font-family:'Liberation Sans',sans-serif;font-size:9.4px;" fill="#fff" textLength="18.0" lengthAdjust="spacingAndGlyphs">7.70</text>
<text x="993.5" y="550.9" xml:space="preserve" style="font-family:'Liberation Sans',sans-serif;font-size:9.4px;" fill="#fff" textLength="18.0" lengthAdjust="spacingAndGlyphs">3.10</text>
<text x="993.5" y="582.9" xml:space="preserve" style="font-family:'Liberation Sans',sans-serif;font-size:9.4px;" fill="#fff" textLength="21.0" lengthAdjust="spacingAndGlyphs">-1.40</text>
<rect x="991" y="552" width="24" height="11" fill="#fff"/>
<text x="994" y="561.2" xml:space="preserve" style="font-family:'Liberation Sans',sans-serif;font-size:9.4px;" fill="#000" textLength="18.0" lengthAdjust="spacingAndGlyphs">1.78</text>
<g clip-path="url(#c1)">
<text x="10" y="597.5" xml:space="preserve" style="font-family:'Liberation Sans',sans-serif;font-size:9.4px;" fill="#fff" textLength="273.0" lengthAdjust="spacingAndGlyphs">VIETHUNGSS-RS-MA[0](14)(21) 3.0249 -12.0000 -3.0000 0.7570</text>
<path d="M6 594.5H988" stroke="#3a3a3a" stroke-width="1" stroke-dasharray="3 3" stroke-dashoffset="0" fill="none" shape-rendering="crispEdges"/>
<path d="M6 596.5H988" stroke="#2f4f4f" stroke-width="1" stroke-dasharray="18 6" stroke-dashoffset="0" fill="none" shape-rendering="crispEdges"/>
<path d="M6 611.5H988" stroke="#124a84" stroke-width="1" stroke-dasharray="3 3" stroke-dashoffset="0" fill="none" shape-rendering="crispEdges"/>
<path d="M6 620.5H988" stroke="#98fb78" stroke-width="1" stroke-dasharray="3 3" stroke-dashoffset="0" fill="none" shape-rendering="crispEdges"/>
<path d="M6 637.5H988" stroke="#3a3a3a" stroke-width="1" stroke-dasharray="3 3" stroke-dashoffset="0" fill="none" shape-rendering="crispEdges"/>
<path d="M6 654.5H988" stroke="#124a84" stroke-width="1" stroke-dasharray="3 3" stroke-dashoffset="0" fill="none" shape-rendering="crispEdges"/>
<path d="M6 662.5H988" stroke="#ff1010" stroke-width="1" stroke-dasharray="3 3" stroke-dashoffset="0" fill="none" shape-rendering="crispEdges"/>
<path d="M6 667.5H988" stroke="#2f4f4f" stroke-width="1" stroke-dasharray="18 6" stroke-dashoffset="0" fill="none" shape-rendering="crispEdges"/>
<path d="M10.5 675V680M14.5 675V680M18.5 675V680M22.5 675V680M26.5 675V680M30.5 675V680M34.5 675V680M38.5 675V680M134.5 675V680M138.5 675V680M142.5 675V680M146.5 675V680M150.5 675V680M226.5 675V680M230.5 675V680M234.5 675V680M238.5 675V680M242.5 675V680M246.5 675V680M330.5 675V680M334.5 675V680M338.5 675V680M342.5 675V680M346.5 675V680M350.5 675V680M354.5 675V680M358.5 675V680M398.5 675V680M402.5 675V680M42.5 670V680M46.5 670V680M50.5 670V680M54.5 670V680M58.5 670V680M62.5 670V680M66.5 670V680M70.5 670V680M74.5 670V680M78.5 670V680M82.5 670V680M86.5 670V680M90.5 670V680M94.5 670V680M98.5 670V680M102.5 670V680M106.5 670V680M110.5 670V680M114.5 670V680M118.5 670V680M122.5 670V680M126.5 670V680M130.5 670V680M250.5 670V680M254.5 670V680M258.5 670V680M262.5 670V680M266.5 670V680M270.5 670V680M274.5 670V680M278.5 670V680M282.5 670V680M286.5 670V680M290.5 670V680M294.5 670V680M298.5 670V680M302.5 670V680M306.5 670V680M310.5 670V680M314.5 670V680M318.5 670V680M322.5 670V680M326.5 670V680M362.5 670V680M366.5 670V680M370.5 670V680M374.5 670V680M378.5 670V680M382.5 670V680M386.5 670V680M390.5 670V680M394.5 670V680" stroke="#00e400" stroke-width="1" fill="none" shape-rendering="crispEdges"/>
<path d="M6.5 680V685M154.5 680V685M158.5 680V685M162.5 680V685M166.5 680V685M210.5 680V685M214.5 680V685M218.5 680V685M222.5 680V685M406.5 680V685M410.5 680V685M414.5 680V685M418.5 680V685M422.5 680V685M442.5 680V685M446.5 680V685M450.5 680V685M170.5 680V690M174.5 680V690M178.5 680V690M182.5 680V690M186.5 680V690M190.5 680V690M194.5 680V690M198.5 680V690M202.5 680V690M206.5 680V690M426.5 680V690M430.5 680V690M434.5 680V690M438.5 680V690M454.5 680V690M458.5 680V690M462.5 680V690M466.5 680V690M470.5 680V690M474.5 680V690M478.5 680V690M482.5 680V690M486.5 680V690M490.5 680V690M494.5 680V690M498.5 680V690M502.5 680V690M506.5 680V690M510.5 680V690M514.5 680V690M518.5 680V690M522.5 680V690M526.5 680V690M530.5 680V690M534.5 680V690M538.5 680V690M542.5 680V690M546.5 680V690M550.5 680V690M554.5 680V690M558.5 680V690M562.5 680V690M566.5 680V690M570.5 680V690M574.5 680V690M578.5 680V690M582.5 680V690M586.5 680V690M590.5 680V690M594.5 680V690M598.5 680V690M602.5 680V690M606.5 680V690M610.5 680V690M614.5 680V690M618.5 680V690M622.5 680V690M626.5 680V690M630.5 680V690M634.5 680V690M638.5 680V690M642.5 680V690M646.5 680V690M650.5 680V690M654.5 680V690M658.5 680V690M662.5 680V690M666.5 680V690M670.5 680V690M674.5 680V690M678.5 680V690M682.5 680V690M686.5 680V690M690.5 680V690M694.5 680V690M698.5 680V690M702.5 680V690M706.5 680V690M710.5 680V690M714.5 680V690M718.5 680V690M722.5 680V690M726.5 680V690M730.5 680V690M734.5 680V690M738.5 680V690M742.5 680V690M746.5 680V690M750.5 680V690M754.5 680V690M758.5 680V690M762.5 680V690M766.5 680V690M770.5 680V690M774.5 680V690M778.5 680V690M782.5 680V690" stroke="#f01010" stroke-width="1" fill="none" shape-rendering="crispEdges"/>
<g shape-rendering="crispEdges">
<rect x="89" y="676" width="3" height="3" fill="#ff10ff"/>
<rect x="93" y="676" width="3" height="3" fill="#ff10ff"/>
<rect x="109" y="676" width="3" height="3" fill="#ff10ff"/>
<rect x="125" y="676" width="3" height="3" fill="#ff10ff"/>
<rect x="297" y="676" width="3" height="3" fill="#ff10ff"/>
<rect x="301" y="676" width="3" height="3" fill="#ff10ff"/>
<rect x="305" y="676" width="3" height="3" fill="#ff10ff"/>
<rect x="309" y="676" width="3" height="3" fill="#ff10ff"/>
<rect x="129" y="680" width="3" height="5" fill="#ff10ff"/>
<rect x="133" y="680" width="3" height="11" fill="#ff10ff"/>
<rect x="313" y="680" width="3" height="5" fill="#ff10ff"/>
<rect x="329" y="680" width="3" height="11" fill="#ff10ff"/>
<rect x="397" y="680" width="3" height="11" fill="#ff10ff"/>
<rect x="193" y="680" width="3" height="3" fill="#14dcdc"/>
<rect x="201" y="680" width="3" height="3" fill="#14dcdc"/>
<rect x="477" y="680" width="3" height="3" fill="#14dcdc"/>
<rect x="553" y="680" width="3" height="3" fill="#14dcdc"/>
<rect x="561" y="680" width="3" height="3" fill="#14dcdc"/>
<rect x="765" y="680" width="3" height="3" fill="#14dcdc"/>
<rect x="769" y="680" width="3" height="3" fill="#14dcdc"/>
<rect x="777" y="680" width="3" height="3" fill="#14dcdc"/>
<rect x="781" y="680" width="3" height="3" fill="#14dcdc"/>
<rect x="205" y="675" width="3" height="4" fill="#14dcdc"/>
<rect x="209" y="669" width="3" height="10" fill="#14dcdc"/>
<rect x="441" y="669" width="3" height="10" fill="#14dcdc"/>
</g>
<circle cx="130.5" cy="670.3" r="2.6" fill="#ff10ff"/>
<circle cx="326.5" cy="670.3" r="2.6" fill="#ff10ff"/>
<circle cx="394.5" cy="670.3" r="2.6" fill="#ff10ff"/>
<circle cx="214.5" cy="689.6" r="2.6" fill="#10e8e8"/>
<circle cx="358.5" cy="689.6" r="2.6" fill="#10e8e8"/>
<circle cx="766.5" cy="689.6" r="2.6" fill="#10e8e8"/>
<polyline points="6.4,651.8 19.4,647.0 33.0,641.0 46.6,636.3 58.0,630.4 70.0,625.6 81.5,620.7 91.0,616.9 103.0,614.0 112.5,613.0 122.0,612.4 132.0,614.0 141.6,616.9 151.0,620.3 161.0,625.6 170.7,631.4 180.4,637.2 190.0,643.0 197.8,646.0 205.5,649.3 213.3,649.3 221.0,648.3 232.7,643.0 248.0,637.2 263.7,629.5 277.3,623.6 290.9,618.8 304.5,615.3 316.0,614.5 325.8,615.0 335.5,616.9 345.2,620.3 355.0,621.3 364.6,620.3 376.0,618.4 389.7,617.2 399.4,618.2 409.0,623.6 418.8,629.5 430.4,635.3 440.0,640.0 451.8,642.7 463.4,647.0 475.0,652.0 486.7,656.6 498.3,660.5 510.0,664.4 521.6,667.0 533.0,669.2 545.0,671.2 556.5,673.0 568.0,674.5 583.0,674.8 597.0,676.4 614.6,677.5 637.0,678.0 677.0,679.0 775.0,679.0 782.0,678.0" stroke="#1e82f0" stroke-width="1" fill="none" shape-rendering="crispEdges"/>
<polyline points="6.4,638.2 11.6,635.3 18.4,634.3 23.3,631.4 29.0,628.5 35.0,625.6 40.7,620.7 48.5,615.0 56.3,610.6 64.0,609.5 73.7,607.7 80.5,605.6 91.0,605.2 95.0,607.0 105.7,607.7 110.6,610.5 116.4,608.7 123.0,608.5 128.0,612.0 133.0,620.7 137.7,628.5 144.5,630.4 149.4,634.3 155.0,642.0 163.0,650.0 170.7,656.6 178.5,660.5 186.0,664.4 194.0,664.8 197.8,664.8 202.6,662.4 206.5,656.6 212.3,651.8 219.0,642.0 228.8,632.4 238.5,624.6 248.0,619.8 259.8,612.0 267.6,610.0 275.4,607.2 285.0,605.2 293.8,604.2 300.6,608.0 306.4,610.5 312.0,611.0 316.0,612.6 322.0,613.4 327.7,620.7 335.5,626.6 342.3,632.4 349.0,629.5 355.0,626.6 362.6,618.8 368.5,615.3 376.0,612.6 380.0,612.0 385.8,614.0 392.6,617.2 398.4,623.6 402.3,634.3 407.0,646.0 413.0,650.8 419.8,651.4 426.6,656.6 431.4,657.6 438.0,655.7 442.0,650.8 446.3,648.3 450.8,651.8 457.6,659.5 465.4,665.4 473.0,670.2 479.0,669.2 486.7,671.2 496.4,673.0 506.0,674.7 515.8,675.6 527.4,677.0 539.0,677.6 548.8,677.6 550.7,678.5 554.6,677.0 562.3,676.4 574.0,677.0 581.0,677.5 592.0,678.0 606.0,679.0 677.0,679.0 775.0,679.0 782.0,677.5" stroke="#f514f0" stroke-width="1" fill="none" shape-rendering="crispEdges"/>
</g>
<g shape-rendering="crispEdges">
<rect x="989" y="587" width="2" height="1" fill="#fff"/>
<rect x="989" y="637" width="2" height="1" fill="#fff"/>
<rect x="989" y="679" width="2" height="1" fill="#fff"/>
<rect x="989" y="690" width="2" height="1" fill="#fff"/>
<rect x="991" y="590" width="29" height="11" fill="#2f4f4f"/>
<rect x="991" y="605" width="29" height="11" fill="#0c4a94"/>
<rect x="991" y="616" width="29" height="9" fill="#98fb98"/>
<rect x="991" y="648" width="29" height="11" fill="#0c4a94"/>
<rect x="991" y="659" width="29" height="2" fill="#f00"/>
<rect x="991" y="661" width="29" height="11" fill="#2f4f4f"/>
</g>
<text x="994" y="596.5" xml:space="preserve" style="font-family:'Liberation Sans',sans-serif;font-size:9.4px;" fill="#fff" textLength="15.0" lengthAdjust="spacingAndGlyphs">110</text>
<rect x="991" y="590" width="29" height="11" fill="#2f4f4f"/>
<text x="994" y="599.6" xml:space="preserve" style="font-family:'Liberation Sans',sans-serif;font-size:9.4px;" fill="#000" textLength="23.0" lengthAdjust="spacingAndGlyphs">97.32</text>
<text x="994" y="614.2" xml:space="preserve" style="font-family:'Liberation Sans',sans-serif;font-size:9.4px;" fill="#000" textLength="23.0" lengthAdjust="spacingAndGlyphs">80.00</text>
<text x="994" y="624.2" xml:space="preserve" style="font-family:'Liberation Sans',sans-serif;font-size:9.4px;" fill="#000" textLength="23.0" lengthAdjust="spacingAndGlyphs">70.00</text>
<text x="993" y="640.4" xml:space="preserve" style="font-family:'Liberation Sans',sans-serif;font-size:9.4px;" fill="#fff" textLength="10.0" lengthAdjust="spacingAndGlyphs">50</text>
<text x="994" y="657.2" xml:space="preserve" style="font-family:'Liberation Sans',sans-serif;font-size:9.4px;" fill="#000" textLength="23.0" lengthAdjust="spacingAndGlyphs">30.00</text>
<text x="994" y="670.2" xml:space="preserve" style="font-family:'Liberation Sans',sans-serif;font-size:9.4px;" fill="#000" textLength="23.0" lengthAdjust="spacingAndGlyphs">14.09</text>
<text x="993" y="682" xml:space="preserve" style="font-family:'Liberation Sans',sans-serif;font-size:9.4px;" fill="#fff" textLength="18.0" lengthAdjust="spacingAndGlyphs">0.00</text>
<text x="993" y="694.3" xml:space="preserve" style="font-family:'Liberation Sans',sans-serif;font-size:9.4px;" fill="#fff" textLength="13.0" lengthAdjust="spacingAndGlyphs">-20</text>
<g clip-path="url(#c2)">
<path d="M14.5 716V717M18.5 715V717M22.5 715V717M26.5 714V717M30.5 713V717M34.5 713V717M38.5 712V717M42.5 711V717M46.5 711V717M50.5 710V717M54.5 710V717M58.5 710V717M62.5 709V717M66.5 709V717M70.5 709V717M74.5 708V717M78.5 708V717M82.5 709V717M86.5 709V717M90.5 709V717M94.5 709V717M98.5 710V717M102.5 710V717M106.5 711V717M110.5 712V717M114.5 713V717M118.5 713V717M122.5 714V717M126.5 715V717M130.5 716V717M134.5 716V717M142.5 717V718M146.5 717V719M150.5 717V720M154.5 717V720M158.5 717V721M162.5 717V722M166.5 717V722M170.5 717V723M174.5 717V724M178.5 717V725M182.5 717V726M186.5 717V726M190.5 717V726M194.5 717V726M198.5 717V725M202.5 717V725M206.5 717V723M210.5 717V722M214.5 717V720M218.5 717V719M230.5 716V717M234.5 715V717M238.5 715V717M242.5 714V717M246.5 713V717M250.5 713V717M254.5 711V717M258.5 709V717M262.5 708V717M266.5 707V717M270.5 707V717M274.5 706V717M278.5 707V717M282.5 707V717M286.5 707V717M290.5 707V717M294.5 708V717M298.5 709V717M302.5 709V717M306.5 710V717M310.5 712V717M314.5 713V717M318.5 714V717M322.5 715V717M326.5 716V717M330.5 716V717M334.5 716V717M338.5 716V717M342.5 716V717M346.5 715V717M350.5 715V717M354.5 714V717M358.5 714V717M362.5 713V717M366.5 713V717M370.5 712V717M374.5 712V717M378.5 713V717M382.5 713V717M386.5 713V717M390.5 714V717M394.5 715V717M402.5 717V718M406.5 717V720M410.5 717V721M414.5 717V721M418.5 717V722M422.5 717V722M426.5 717V721M430.5 717V721M434.5 717V720M438.5 717V720M442.5 717V719M446.5 717V719M450.5 717V719M454.5 717V721M458.5 717V723M462.5 717V726M466.5 717V729M470.5 717V732M474.5 717V733M478.5 717V733M482.5 717V733M486.5 717V733M490.5 717V733M494.5 717V733M498.5 717V733M502.5 717V733M506.5 717V734M510.5 717V734M514.5 717V736M518.5 717V738M522.5 717V740M526.5 717V741M530.5 717V742M534.5 717V743M538.5 717V743M542.5 717V744M546.5 717V743M550.5 717V742M554.5 717V741M558.5 717V740M562.5 717V738M566.5 717V737M570.5 717V738M574.5 717V740M578.5 717V742M582.5 717V744M586.5 717V746M590.5 717V748M594.5 717V751M598.5 717V753M602.5 717V755M606.5 717V755M610.5 717V755M614.5 717V754M618.5 717V754M622.5 717V755M626.5 717V755M630.5 717V755M634.5 717V757M638.5 717V759M642.5 717V761M646.5 717V763M650.5 717V766M654.5 717V768M658.5 717V770M662.5 717V771M666.5 717V772M670.5 717V772M674.5 717V771M678.5 717V770M682.5 717V769M686.5 717V767M690.5 717V765M694.5 717V763M698.5 717V761M702.5 717V759M706.5 717V757M710.5 717V755M714.5 717V753M718.5 717V751M722.5 717V749M726.5 717V747M730.5 717V745M734.5 717V743M738.5 717V742M742.5 717V740M746.5 717V739M750.5 717V737M754.5 717V736M758.5 717V735M762.5 717V734M766.5 717V732M770.5 717V731M774.5 717V729M778.5 717V728M782.5 717V726" stroke="#5c5c5c" stroke-width="1" fill="none" shape-rendering="crispEdges"/>
<polyline points="6.3,719.8 20.0,716.5 37.8,714.7 50.4,710.2 68.0,707.0 85.7,705.6 100.9,705.6 113.5,707.0 131.0,709.7 151.3,714.7 171.5,719.8 194.2,725.3 211.9,725.3 227.0,721.5 242.0,716.5 250.0,714.7 262.6,711.4 277.7,707.0 295.4,705.6 310.5,707.0 325.7,710.7 340.8,714.0 353.4,715.2 366.0,715.2 381.0,712.7 398.8,712.7 414.0,715.7 431.6,722.3 459.3,722.3 472.0,726.6 484.6,730.4 497.0,733.2 511.6,733.2 526.0,736.6 540.7,741.0 549.5,743.2 558.0,743.0 570.0,741.5 587.3,741.5 599.0,746.7 613.5,752.0 625.0,754.6 634.0,755.5 645.5,755.5 657.0,761.3 671.7,768.0 680.4,770.0 689.0,770.0 700.8,767.0 715.3,759.8 732.8,751.0 747.3,744.7 761.9,739.5 773.5,735.0 782.0,732.2" stroke="#f01010" stroke-width="1" fill="none" shape-rendering="crispEdges"/>
<text x="9.6" y="712.7" xml:space="preserve" style="font-family:'Liberation Sans',sans-serif;font-size:9.4px;" fill="#fff" textLength="123.4" lengthAdjust="spacingAndGlyphs">MACD(12,26,9) -1.900 -2.769</text>
</g>
<g shape-rendering="crispEdges" fill="#fff">
<rect x="989" y="704" width="2" height="1"/>
<rect x="989" y="716" width="2" height="1"/>
<rect x="989" y="770" width="2" height="1"/>
<rect x="6" y="777" width="1" height="3"/>
<rect x="70" y="777" width="1" height="3"/>
<rect x="134" y="777" width="1" height="3"/>
<rect x="198" y="777" width="1" height="3"/>
<rect x="262" y="777" width="1" height="3"/>
<rect x="326" y="777" width="1" height="3"/>
<rect x="390" y="777" width="1" height="3"/>
<rect x="454" y="777" width="1" height="3"/>
<rect x="518" y="777" width="1" height="3"/>
<rect x="582" y="777" width="1" height="3"/>
<rect x="646" y="777" width="1" height="3"/>
<rect x="710" y="777" width="1" height="3"/>
<rect x="774" y="777" width="1" height="3"/>
</g>
<text x="993" y="710" xml:space="preserve" style="font-family:'Liberation Sans',sans-serif;font-size:9.4px;" fill="#fff" textLength="23.0" lengthAdjust="spacingAndGlyphs">2.992</text>
<text x="993" y="719.6" xml:space="preserve" style="font-family:'Liberation Sans',sans-serif;font-size:9.4px;" fill="#fff" textLength="18.0" lengthAdjust="spacingAndGlyphs">0.00</text>
<text x="993" y="773" xml:space="preserve" style="font-family:'Liberation Sans',sans-serif;font-size:9.4px;" fill="#fff" textLength="30.0" lengthAdjust="spacingAndGlyphs">-10.706</text>
<text x="4.6" y="788.9" xml:space="preserve" style="font-family:'Liberation Sans',sans-serif;font-size:9.4px;" fill="#fff" textLength="52.8" lengthAdjust="spacingAndGlyphs">29 Aug 2005</text>
<text x="68.6" y="788.9" xml:space="preserve" style="font-family:'Liberation Sans',sans-serif;font-size:9.4px;" fill="#fff" textLength="52.8" lengthAdjust="spacingAndGlyphs">19 Dec 2005</text>
<text x="132.6" y="788.9" xml:space="preserve" style="font-family:'Liberation Sans',sans-serif;font-size:9.4px;" fill="#fff" textLength="52.8" lengthAdjust="spacingAndGlyphs">10 Apr 2006</text>
<text x="196.6" y="788.9" xml:space="preserve" style="font-family:'Liberation Sans',sans-serif;font-size:9.4px;" fill="#fff" textLength="52.8" lengthAdjust="spacingAndGlyphs">31 Jul 2006</text>
<text x="260.6" y="788.9" xml:space="preserve" style="font-family:'Liberation Sans',sans-serif;font-size:9.4px;" fill="#fff" textLength="52.8" lengthAdjust="spacingAndGlyphs">20 Nov 2006</text>
<text x="324.6" y="788.9" xml:space="preserve" style="font-family:'Liberation Sans',sans-serif;font-size:9.4px;" fill="#fff" textLength="52.8" lengthAdjust="spacingAndGlyphs">12 Mar 2007</text>
<text x="388.6" y="788.9" xml:space="preserve" style="font-family:'Liberation Sans',sans-serif;font-size:9.4px;" fill="#fff" textLength="47.5" lengthAdjust="spacingAndGlyphs">2 Jul 2007</text>
<text x="452.6" y="788.9" xml:space="preserve" style="font-family:'Liberation Sans',sans-serif;font-size:9.4px;" fill="#fff" textLength="52.8" lengthAdjust="spacingAndGlyphs">22 Oct 2007</text>
<text x="516.6" y="788.9" xml:space="preserve" style="font-family:'Liberation Sans',sans-serif;font-size:9.4px;" fill="#fff" textLength="52.8" lengthAdjust="spacingAndGlyphs">11 Feb 2008</text>
<text x="580.6" y="788.9" xml:space="preserve" style="font-family:'Liberation Sans',sans-serif;font-size:9.4px;" fill="#fff" textLength="47.5" lengthAdjust="spacingAndGlyphs">2 Jun 2008</text>
<text x="644.6" y="788.9" xml:space="preserve" style="font-family:'Liberation Sans',sans-serif;font-size:9.4px;" fill="#fff" textLength="52.8" lengthAdjust="spacingAndGlyphs">14 Sep 2008</text>
<text x="708.6" y="788.9" xml:space="preserve" style="font-family:'Liberation Sans',sans-serif;font-size:9.4px;" fill="#fff" textLength="47.5" lengthAdjust="spacingAndGlyphs">4 Jan 2009</text>
<text x="772.6" y="788.9" xml:space="preserve" style="font-family:'Liberation Sans',sans-serif;font-size:9.4px;" fill="#fff" textLength="52.8" lengthAdjust="spacingAndGlyphs">26 Apr 2009</text>
</svg></body></html>
